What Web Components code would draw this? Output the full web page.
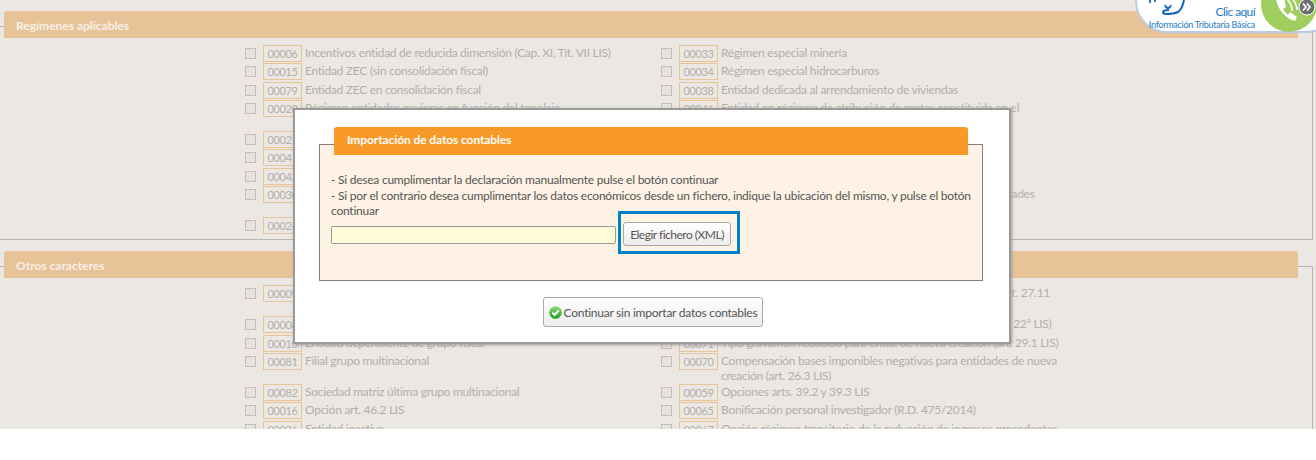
<!DOCTYPE html>
<html lang="es"><head><meta charset="utf-8"><title>Importación de datos contables</title>
<style>
html,body{margin:0;padding:0;background:#fff}
body{font-family:"Lato","Noto Sans",sans-serif;font-size:12px;height:460px;overflow:hidden}
x-dialog,x-help-widget{z-index:5}
</style></head><body>
<x-page>
  <x-section title-text="Regímenes aplicables" pad="7">
    <x-opt code="00006">Incentivos entidad de reducida dimensión (Cap. XI, Tít. VII LIS)</x-opt>
    <x-opt code="00033">Régimen especial minería</x-opt>
    <x-opt code="00015">Entidad ZEC (sin consolidación fiscal)</x-opt>
    <x-opt code="00034">Régimen especial hidrocarburos</x-opt>
    <x-opt code="00079">Entidad ZEC en consolidación fiscal</x-opt>
    <x-opt code="00038">Entidad dedicada al arrendamiento de viviendas</x-opt>
    <x-opt code="00020">Régimen entidades navieras en función del tonelaje</x-opt>
    <x-opt code="00046">Entidad en régimen de atribución de rentas constituida en el extranjero</x-opt>
    <x-opt code="00021">Agrupación de interés económico</x-opt>
    <x-opt code="00039">Sociedad cotizada</x-opt>
    <x-opt code="00041">Sociedad de desarrollo</x-opt>
    <x-opt code="00040">Sociedad de inversión</x-opt>
    <x-opt code="00042">Entidad de capital riesgo</x-opt>
    <x-opt code="00043">Fondo de inversión</x-opt>
    <x-opt code="00030">Entidad de crédito</x-opt>
    <x-opt code="00044">Entidad sometida a normativa foral con operación en entidades autónomas</x-opt>
    <x-opt code="00024">Entidad parcialmente exenta</x-opt>
    <x-opt code="00045">Entidad sin fines lucrativos</x-opt>
  </x-section>
  <x-section title-text="Otros caracteres" pad="7">
    <x-opt code="00009">Sociedad dominante de grupo fiscal</x-opt>
    <x-opt code="00069">Entidad que aplique la reserva de capitalización según el art. 27.11 correspondiente</x-opt>
    <x-opt code="00008">Entidad dominante de grupo mercantil</x-opt>
    <x-opt code="00072">Entidad con reducciones de la base imponible positiva (art. 22ª LIS)</x-opt>
    <x-opt code="00010">Entidad dependiente de grupo fiscal</x-opt>
    <x-opt code="00071">Tipo gravamen reducido para entid. de nueva creación (art. 29.1 LIS)</x-opt>
    <x-opt code="00081">Filial grupo multinacional</x-opt>
    <x-opt code="00070">Compensación bases imponibles negativas para entidades de nueva creación (art. 26.3 LIS)</x-opt>
    <x-opt code="00082">Sociedad matriz última grupo multinacional</x-opt>
    <x-opt code="00059">Opciones arts. 39.2 y 39.3 LIS</x-opt>
    <x-opt code="00016">Opción art. 46.2 LIS</x-opt>
    <x-opt code="00065">Bonificación personal investigador (R.D. 475/2014)</x-opt>
    <x-opt code="00026">Entidad inactiva</x-opt>
    <x-opt code="00067">Opción régimen transitorio de la reducción de ingresos procedentes</x-opt>
  </x-section>
  <x-dialog></x-dialog>
  <x-help-widget></x-help-widget>
</x-page>
<script>
function def(name,html,extra){
  const t=document.createElement('template');t.innerHTML=html;
  customElements.define(name,class extends HTMLElement{
    constructor(){super();this.attachShadow({mode:'open'}).appendChild(t.content.cloneNode(true));}
    connectedCallback(){extra&&extra(this);}
  });
}
def('x-page',`<style>:host{display:block;position:relative;height:429px;overflow:hidden;background:#ebe8e3;padding-top:11px;box-sizing:border-box}</style><slot></slot>`);
def('x-section',`<style>
:host{display:block;margin-bottom:11px}
header{height:27px;margin-left:4px;width:1294px;background:#e8c397;border-radius:3px 3px 0 0;color:#f6f0e8;font-weight:700;font-size:12px;line-height:29px;padding-left:12px;box-sizing:border-box;position:relative}
.body{margin:-12px 3px 0 -2px;border:1px solid #b7b5b1;padding-bottom:5px;display:grid;grid-template-columns:416px 400px;row-gap:1.25px;padding-left:246px}
</style><header></header><div class="body"><slot></slot></div>`,el=>{
  el.shadowRoot.querySelector('header').textContent=el.getAttribute('title-text');
  el.shadowRoot.querySelector('.body').style.paddingTop=(11+(+el.getAttribute('pad')))+'px';
});
def('x-opt',`<style>
:host{display:flex;align-items:flex-start;color:#b3aeaa;font-size:12px;line-height:15px;letter-spacing:-.28px}
.c{width:11px;height:11px;border:1px solid #c0bebb;box-sizing:border-box;background:#e6e3df;margin:3px 7px 0 0;flex:none}
.k{width:39px;height:17px;border:1px solid #e8c397;box-sizing:border-box;text-align:center;flex:none;line-height:15px;margin-right:3px;font-size:11px;letter-spacing:-.35px}
.t{width:345px}
</style><span class="c"></span><span class="k"></span><span class="t"><slot></slot></span>`,el=>{
  el.shadowRoot.querySelector('.k').textContent=el.getAttribute('code');
});
def('x-btn',`<style>
:host{display:inline-flex;align-items:center;justify-content:center;box-sizing:border-box;border:1px solid #a9a9a9;border-radius:3px;background:linear-gradient(#fff,#ececec);color:#555;font-size:12px;letter-spacing:var(--ls,-.25px);white-space:nowrap}
</style><slot></slot>`);
def('x-dialog',`<style>
:host{display:block;position:absolute;left:293px;top:108px;width:718px;height:236px;box-sizing:border-box;background:#fff;border:2px solid #9a9a9a;box-shadow:1px 1px 3px #999;padding:34px 26px 0 24px;color:#555;font-size:12px;line-height:15px;letter-spacing:-.24px}
.box{height:137px;border:1px solid #7f7f7f;background:#fef2e4;box-sizing:border-box;padding:27px 11px 0;position:relative}
h2{margin:0;position:absolute;left:14px;right:14px;top:-18px;height:28px;background:#f99a28;border-radius:3px 3px 0 0;color:#fff;font-size:12px;line-height:26px;font-weight:700;padding-left:13px;letter-spacing:-.1px}
p{margin:0 0 1px}
.row{margin-top:1px;position:relative;height:15px}
.in{position:absolute;left:0;top:7px;width:285px;height:18px;box-sizing:border-box;background:#fefbd8;border:1px solid #999;border-radius:2px}
.hl{position:absolute;left:287px;top:-8px;width:122px;height:43px;box-sizing:border-box;border:3px solid #0080c8;display:flex;align-items:flex-start;justify-content:flex-start;padding:8px 0 0 2px}
.hl x-btn{width:108px;height:24px;--ls:-.5px}
.foot{display:flex;justify-content:center;margin-top:16px;padding-left:4px}
.foot x-btn{width:220px;height:30px;gap:2px}
svg{display:block}
</style>
<div class="box"><h2>Importación de datos contables</h2>
<p>- Si desea cumplimentar la declaración manualmente pulse el botón continuar</p>
<p>- Si por el contrario desea cumplimentar los datos económicos desde un fichero, indique la ubicación del mismo, y pulse el botón<br>continuar</p>
<div class="row"><div class="in"></div><div class="hl"><x-btn>Elegir fichero (XML)</x-btn></div></div>
</div>
<div class="foot"><x-btn><svg width="13" height="13" viewBox="0 0 13 13"><defs><linearGradient id="g" x1="0" y1="0" x2="0" y2="1"><stop offset="0" stop-color="#8fdc7a"/><stop offset="1" stop-color="#1d9a1d"/></linearGradient></defs><circle cx="6.5" cy="6.5" r="6.3" fill="url(#g)"/><path d="M3.4 6.6 5.6 9 9.8 4.4" fill="none" stroke="#fff" stroke-width="2"/></svg>Continuar sin importar datos contables</x-btn></div>`);
def('x-help-widget',`<style>
:host{display:block;position:absolute;right:-20px;top:-30px;width:201px;height:63px;box-sizing:border-box;background:#fff;border:2px solid #b9cbe6;border-radius:0 0 30px 32px;color:#1f7ac4}
.a{position:absolute;right:79px;top:33px;font-size:12px;line-height:14px;letter-spacing:-.6px}
.b{position:absolute;right:79px;top:47px;font-size:9px;line-height:12px;white-space:nowrap;letter-spacing:-.27px}
svg{position:absolute;left:0;top:0;overflow:visible}
</style>
<svg width="201" height="63" viewBox="0 0 201 63">
<path d="M47 28C46 33 44 38 41 40 37 42 33 42 29 42 26 42 25 40 27 39 28 38 30 38 32 38" fill="none" stroke="#1466b8" stroke-width="2"/>
<path d="M13 28v3M18 28v2M28 33c1 4 5 4 6 0" fill="none" stroke="#1466b8" stroke-width="1.8"/>
<circle cx="152" cy="32" r="28" fill="#a0cf5f"/>
<path d="M139 27 147 26 149 35 146 37C147 39 149 41 151 43L153 40 160 45 158 49C150 47 141 39 139 27z" fill="#fff"/>
<path d="M150 27C153 30 155 34 155 39M155 26C158 30 160 34 160 38" fill="none" stroke="#fff" stroke-width="1.6"/>
<circle cx="170" cy="35" r="8" fill="#6f6f6f" stroke="#fff" stroke-width="1"/>
<path d="M166 31.5l3 3.5-3 3.5M170 31.5l3 3.5-3 3.5" fill="none" stroke="#fff" stroke-width="1.8"/>
</svg>
<div class="a">Clic aquí</div><div class="b">Información Tributaria Básica</div>`);
</script>
</body></html>
